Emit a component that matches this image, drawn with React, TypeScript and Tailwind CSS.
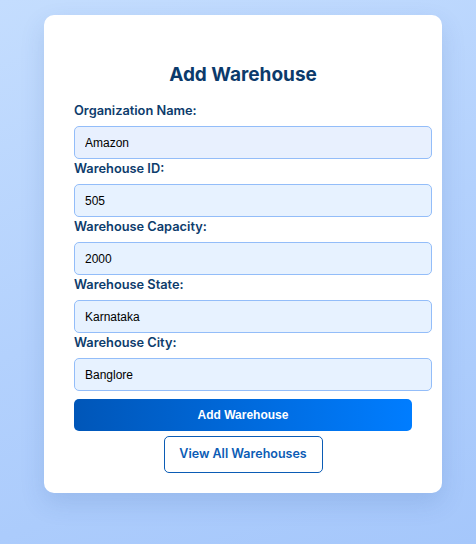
import React from 'react';

const fields = [
  { label: 'Organization Name:', value: 'Amazon', autofill: true },
  { label: 'Warehouse ID:', value: '505' },
  { label: 'Warehouse Capacity:', value: '2000' },
  { label: 'Warehouse State:', value: 'Karnataka' },
  { label: 'Warehouse City:', value: 'Banglore' },
];

export default function App(): React.ReactElement {
  return (
    <main className="min-h-[544px] w-full bg-[linear-gradient(160deg,#c4ddfe_0%,#b3d1fd_50%,#a5c7fb_100%)] pt-[15px] pb-[51px] font-['Inter',sans-serif]">
      <div className="ml-[44px] w-[398px] rounded-[10px] bg-white px-[30px] pt-[48px] pb-[20px] shadow-[0_10px_25px_rgba(40,80,150,0.15)]">
        {/* Title */}
        <h2 className="mb-[14px] text-center text-[19px] font-bold leading-[24px] text-[#0b3a6b]">Add Warehouse</h2>

        <form onSubmit={(e) => e.preventDefault()}>
          {fields.map((f) => (
            <div key={f.label}>
              <label className="mb-[5px] block text-[12.8px] font-semibold leading-[20px] text-[#0d3c6c]">{f.label}</label>
              <input
                type="text"
                defaultValue={f.value}
                className={`block h-[33px] w-[358px] rounded-[5px] border border-[#93bdf9] px-[10px] font-['Liberation_Sans',Arial,sans-serif] text-[12px] text-black outline-none ${
                  f.autofill ? 'bg-[#e8f0fe]' : 'bg-[#e7f2ff]'
                }`}
              />
            </div>
          ))}

          {/* Actions */}
          <button
            type="submit"
            className="mt-[8px] block h-[32px] w-full rounded-[5px] bg-[linear-gradient(90deg,#0056b8,#007dff)] font-['Liberation_Sans',Arial,sans-serif] text-[12px] font-bold text-white"
          >
            Add Warehouse
          </button>
          <div className="mt-[5px] flex justify-center">
            <button
              type="button"
              className="h-[37px] w-[159px] rounded-[5px] border border-[#0b5cb5] bg-white text-[12.5px] font-semibold text-[#0b5cb5]"
            >
              View All Warehouses
            </button>
          </div>
        </form>
      </div>
    </main>
  );
}
